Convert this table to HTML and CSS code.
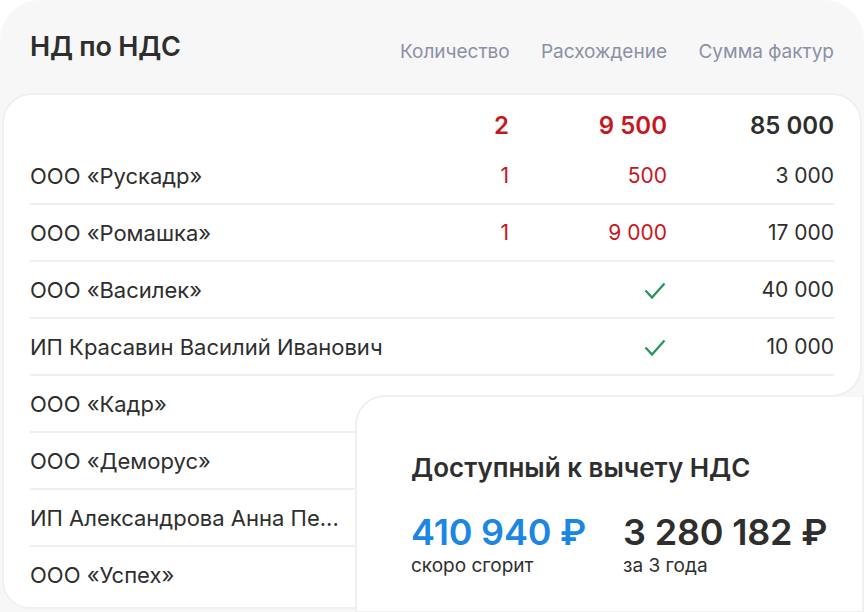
FILE: index.html
```html
<!DOCTYPE html>
<html lang="ru">
<head>
    <meta charset="UTF-8">
    <meta name="viewport" content="width=device-width, initial-scale=1.0">
    <title>НД по НДС</title>
    <link rel="stylesheet" href="styles.css">
</head>
<body>
    <div class="panel">
        <div class="panel-head">
            <h2>НД по НДС</h2>
            <span class="col-title">Количество</span>
            <span class="col-title">Расхождение</span>
            <span class="col-title">Сумма фактур</span>
        </div>

        <div class="sheet">
            <div class="row totals">
                <span></span>
                <span class="num red">2</span>
                <span class="num red">9 500</span>
                <span class="num">85 000</span>
            </div>
            <div class="row">
                <span class="name">ООО «Рускадр»</span>
                <span class="num red">1</span>
                <span class="num red">500</span>
                <span class="num">3 000</span>
            </div>
            <div class="row">
                <span class="name">ООО «Ромашка»</span>
                <span class="num red">1</span>
                <span class="num red">9 000</span>
                <span class="num">17 000</span>
            </div>
            <div class="row">
                <span class="name">ООО «Василек»</span>
                <span></span>
                <span class="num"><svg class="check" viewBox="0 0 22 18"><path d="M1.5 8.5 L8 15.5 L20.5 1.5"/></svg></span>
                <span class="num">40 000</span>
            </div>
            <div class="row">
                <span class="name">ИП Красавин Василий Иванович</span>
                <span></span>
                <span class="num"><svg class="check" viewBox="0 0 22 18"><path d="M1.5 8.5 L8 15.5 L20.5 1.5"/></svg></span>
                <span class="num">10 000</span>
            </div>
            <div class="row">
                <span class="name">ООО «Кадр»</span>
            </div>
            <div class="row">
                <span class="name">ООО «Деморус»</span>
            </div>
            <div class="row">
                <span class="name">ИП Александрова Анна Пе...</span>
            </div>
            <div class="row last">
                <span class="name">ООО «Успех»</span>
            </div>

            <div class="summary">
                <h3>Доступный к вычету НДС</h3>
                <div class="amounts">
                    <div class="amount">
                        <strong class="blue">410 940 ₽</strong>
                        <span>скоро сгорит</span>
                    </div>
                    <div class="amount">
                        <strong>3 280 182 ₽</strong>
                        <span>за 3 года</span>
                    </div>
                </div>
            </div>
        </div>
    </div>
</body>
</html>
```

FILE: styles.css
```css
:root {
    --panel-bg: #f7f7f7;
    --text-color: #2e2e2e;
    --muted: #8b90a6;
    --red: #c8161e;
    --blue: #1b87e3;
    --green: #23955b;
    --line: #efefef;
    --edge: #f0f0f0;
}

* {
    margin: 0;
    padding: 0;
    box-sizing: border-box;
}

body {
    font-family: 'Inter', 'Noto Sans', sans-serif;
    background: #ffffff;
    color: var(--text-color);
    width: 864px;
    height: 612px;
    overflow: hidden;
}

.panel {
    height: 612px;
    background: var(--panel-bg);
    border-radius: 40px 40px 0 0;
    padding: 0 2px;
}

.panel-head,
.row {
    display: grid;
    grid-template-columns: 1fr 109px 158px 167px;
    align-items: center;
}

.panel-head {
    height: 93px;
    padding: 0 28px;
}

.panel-head h2 {
    font-size: 27px;
    font-weight: 600;
    letter-spacing: -0.2px;
}

.col-title {
    text-align: right;
    font-size: 19px;
    color: var(--muted);
    padding-top: 10px;
}

.sheet {
    position: relative;
    background: #ffffff;
    border: 2px solid var(--edge);
    border-radius: 30px 30px 28px 28px;
    padding: 8px 26px 5px;
}

/* rounded corner of the table above the summary card */
.sheet::after {
    content: '';
    position: absolute;
    right: -2px;
    top: 272px;
    width: 30px;
    height: 30px;
    background: radial-gradient(circle at 0 0, transparent 27.5px, var(--edge) 28px, var(--edge) 29.5px, var(--panel-bg) 30px);
}

.row {
    height: 57px;
    border-bottom: 2px solid var(--line);
    font-size: 21px;
}

.row.last {
    border-bottom: none;
    height: 55px;
}

.totals {
    height: 45px;
    border-bottom: none;
    font-size: 24px;
    font-weight: 600;
}

.name {
    white-space: nowrap;
    font-size: 22px;
}

.num {
    text-align: right;
}

.red {
    color: var(--red);
}

.check {
    width: 22px;
    height: 18px;
    margin-right: 1px;
    vertical-align: -3px;
    fill: none;
    stroke: var(--green);
    stroke-width: 2.2;
}

.summary {
    position: absolute;
    left: 351px;
    top: 300px;
    right: -4px;
    bottom: -6px;
    background: #ffffff;
    border: 2px solid var(--edge);
    border-radius: 30px 0 0 0;
    padding: 55px 0 0 54px;
}

.summary h3 {
    font-size: 26px;
    font-weight: 600;
    line-height: 32px;
}

.amounts {
    display: flex;
    gap: 37px;
    margin-top: 28px;
}

.amount strong {
    display: block;
    font-size: 36px;
    font-weight: 600;
    line-height: 40px;
    letter-spacing: -0.2px;
}

.amount strong.blue {
    color: var(--blue);
}

.amount span {
    display: block;
    font-size: 19px;
    line-height: 24px;
    margin-top: 2px;
}
```
